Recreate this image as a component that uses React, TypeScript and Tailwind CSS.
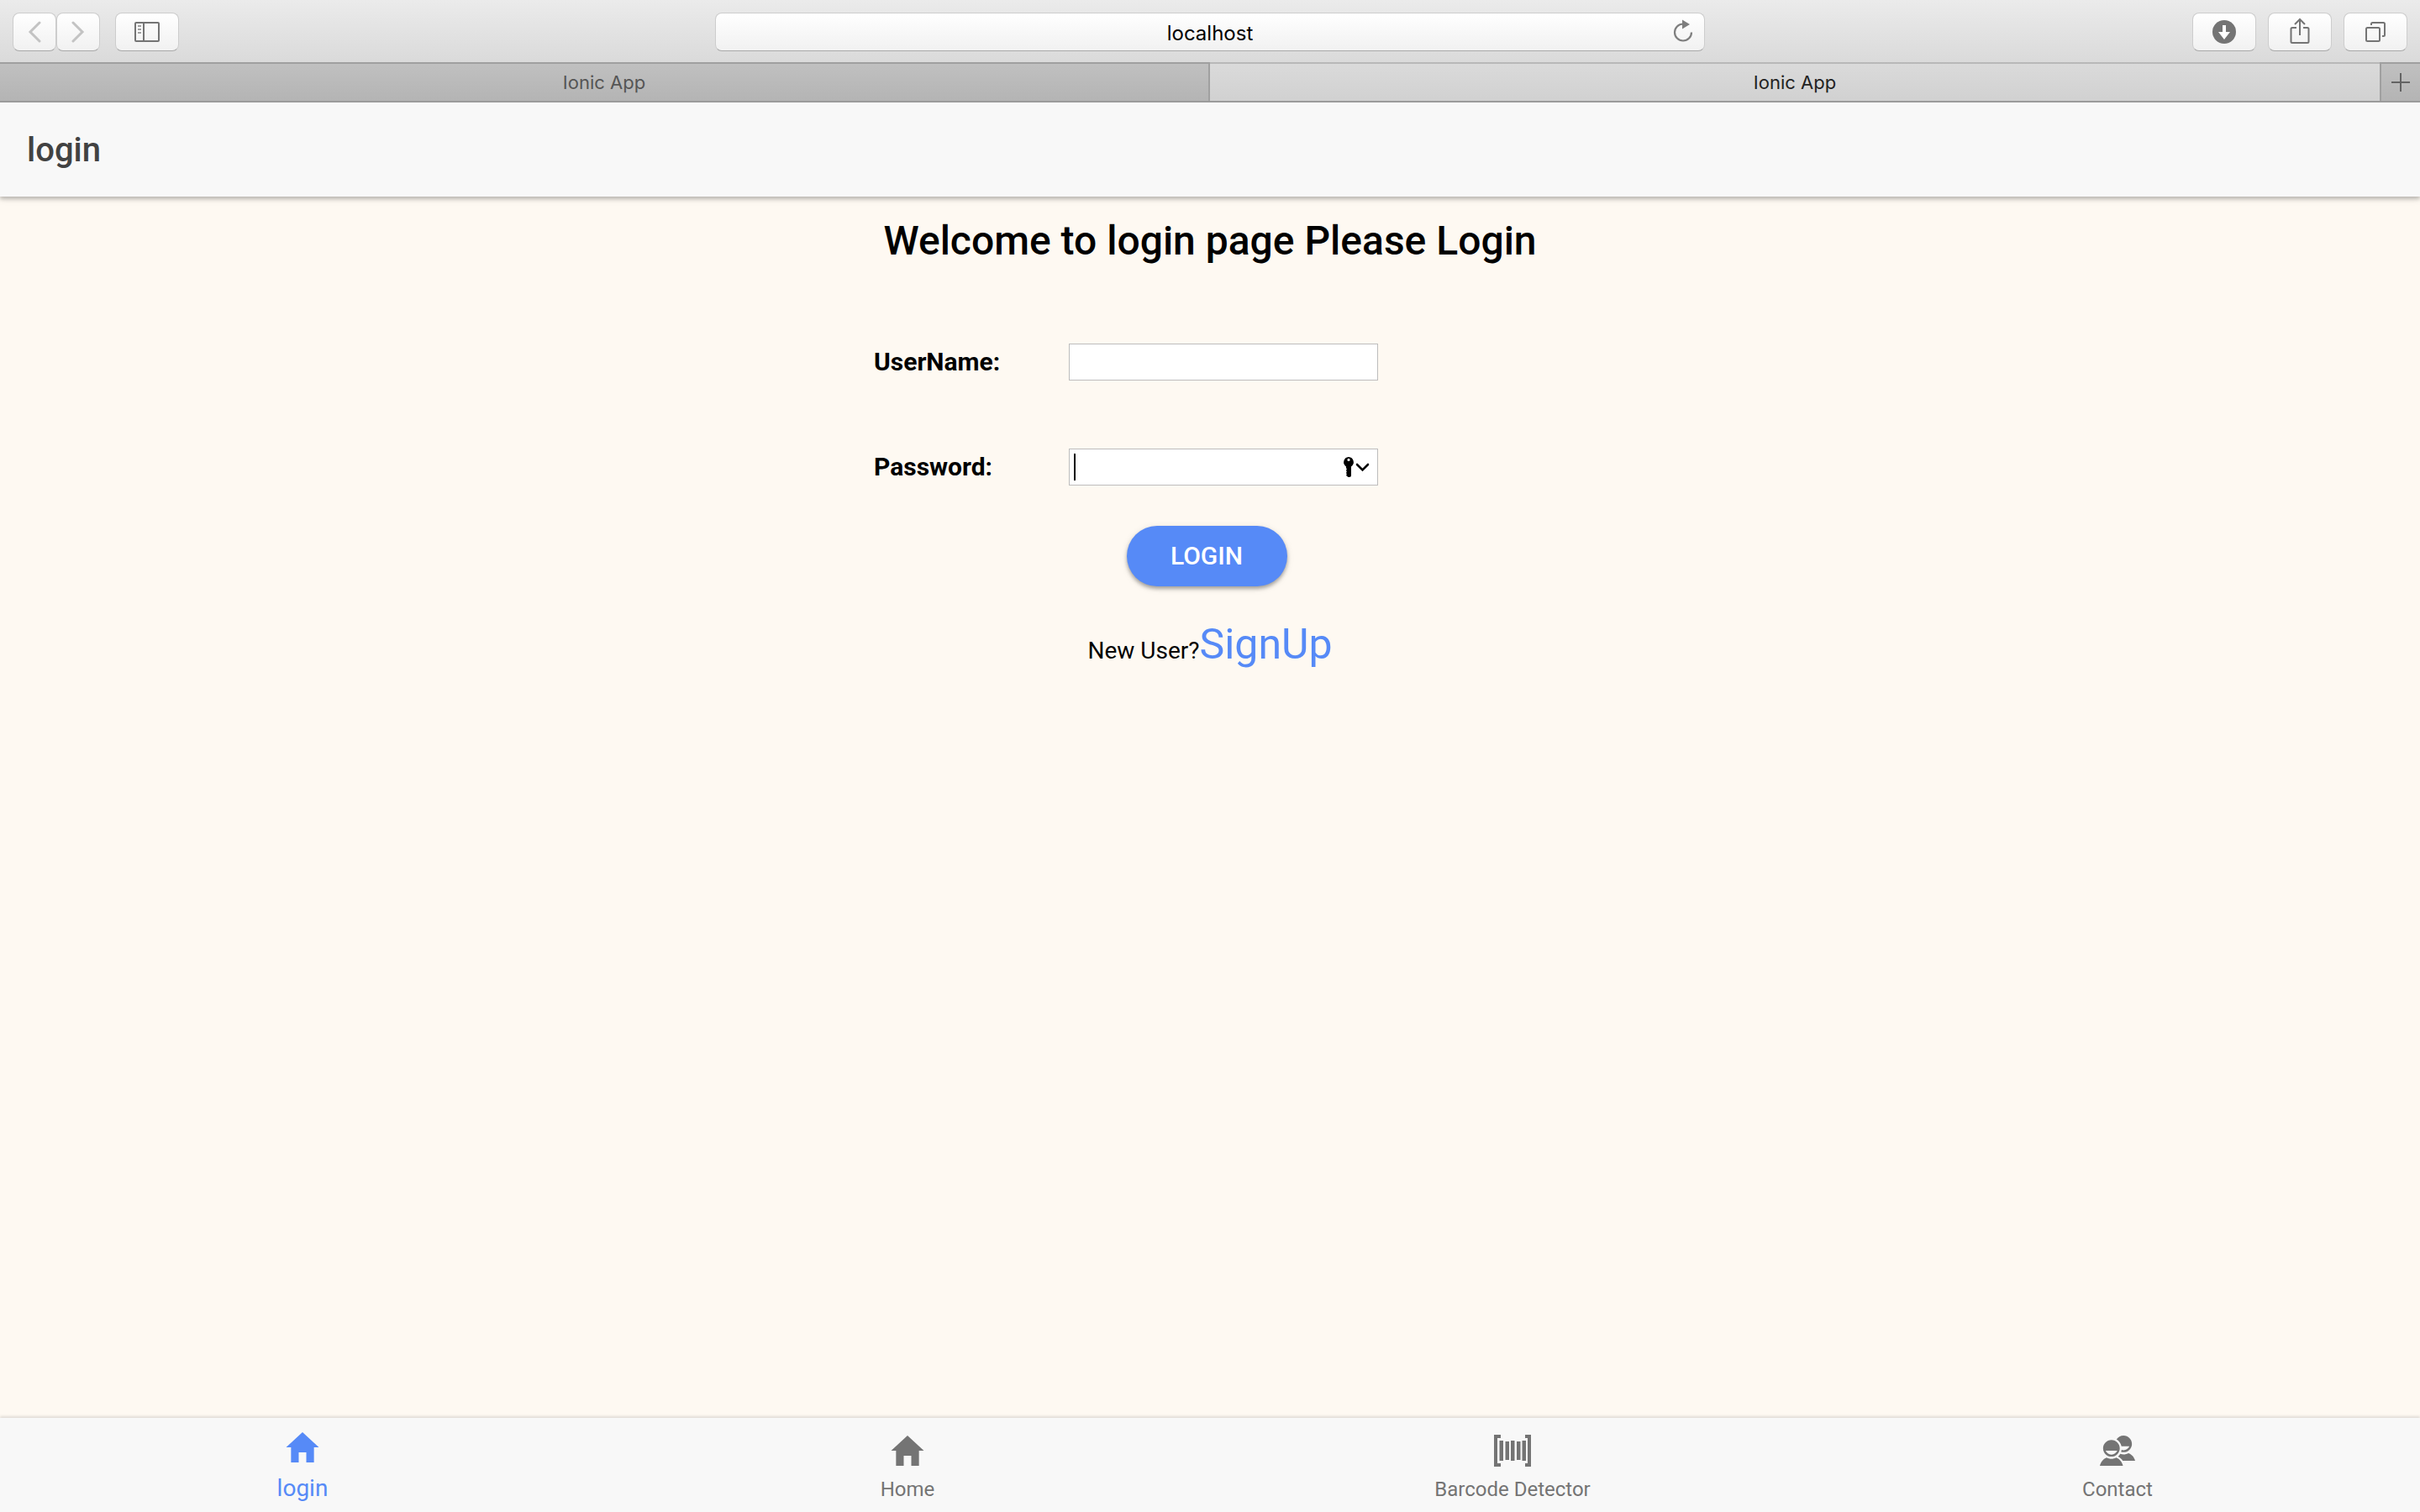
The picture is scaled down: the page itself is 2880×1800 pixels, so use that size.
import type { ReactNode } from "react";
import { IoMdHome, IoMdContacts } from "react-icons/io";

function ChromeButton({ label, wide, children }: { label: string; wide?: boolean; children: ReactNode }) {
  return (
    <button
      type="button"
      aria-label={label}
      className={
        "flex h-[46px] items-center justify-center rounded-[8px] border border-[#cdcdcd] border-b-[#a8a8a8] bg-linear-to-b from-white to-[#f1f1f1] " +
        (wide ? "w-[76px]" : "w-[52px]")
      }
    >
      {children}
    </button>
  );
}

function Toolbar() {
  return (
    <div className="grid h-[74px] grid-cols-[1fr_minmax(0,1178px)_1fr] items-center bg-linear-to-b from-[#ebebeb] to-[#dadada] px-[15px] pt-0.5">
      <div className="flex">
        <ChromeButton label="Back">
          <svg width="16" height="26" viewBox="0 0 16 26" fill="none" stroke="#c3c3c3" strokeWidth="3" strokeLinecap="round">
            <path d="M14 2 3 13l11 11" />
          </svg>
        </ChromeButton>
        <ChromeButton label="Forward">
          <svg width="16" height="26" viewBox="0 0 16 26" fill="none" stroke="#c3c3c3" strokeWidth="3" strokeLinecap="round">
            <path d="m2 2 11 11L2 24" />
          </svg>
        </ChromeButton>
        <div className="ml-[18px]">
          <ChromeButton label="Show sidebar" wide>
            <svg width="30" height="24" viewBox="0 0 30 24" fill="none" stroke="#747474" strokeWidth="2">
              <rect x="1" y="1" width="28" height="22" rx="1" />
              <path d="M11 1v22" />
              <path d="M4 5h4M4 9h4M4 13h4" stroke="#a0a0a0" />
            </svg>
          </ChromeButton>
        </div>
      </div>
      <div className="relative">
        <input
          aria-label="Address"
          defaultValue="localhost"
          className="block h-[46px] w-full rounded-[8px] border border-[#cdcdcd] border-b-[#a8a8a8] bg-linear-to-b from-white to-[#f1f1f1] pt-0.5 text-center font-[Inter,sans-serif] text-[24px] text-black outline-none"
        />
        <button type="button" aria-label="Reload" className="absolute top-2 right-3.5">
          <svg width="24" height="28" viewBox="0 0 24 28">
            <path d="M22 15.500A10 10 0 1 1 12 5.500" fill="none" stroke="#7e7e7e" strokeWidth="2.200" />
            <path d="M11 .5v11l9-5.500z" fill="#7e7e7e" />
          </svg>
        </button>
      </div>
      <div className="flex justify-end gap-3.5">
        <ChromeButton label="Downloads" wide>
          <svg width="28" height="28" viewBox="0 0 28 28">
            <circle cx="14" cy="14" r="14" fill="#747474" />
            <path d="M12 6h4v8h5l-7 9-7-9h5z" fill="#fff" />
          </svg>
        </ChromeButton>
        <ChromeButton label="Share" wide>
          <svg width="24" height="34" viewBox="0 0 24 34" fill="none" stroke="#747474" strokeWidth="2">
            <path d="M8 12H3a1.500 1.500 0 0 0-1.500 1.500v15A1.500 1.500 0 0 0 3 30h18a1.500 1.500 0 0 0 1.500-1.500v-15A1.500 1.500 0 0 0 21 12h-5M12 21V2M6 8l6-6 6 6" />
          </svg>
        </ChromeButton>
        <ChromeButton label="Show all tabs" wide>
          <svg width="24" height="24" viewBox="0 0 24 24" fill="none" stroke="#747474" strokeWidth="2">
            <rect x="1" y="7" width="16" height="16" rx="1.500" />
            <path d="M7 4V2.500A1.500 1.500 0 0 1 8.500 1h13A1.500 1.500 0 0 1 23 2.500v13a1.500 1.500 0 0 1-1.500 1.500H20" />
          </svg>
        </ChromeButton>
      </div>
    </div>
  );
}

function TabStrip() {
  return (
    <div className="relative z-10 flex h-12 border-b-2 border-[#9b9b9b] font-[Inter,sans-serif] text-[22px]">
      <button type="button" className="w-1/2 border-t-2 border-r-2 border-[#a0a0a0] bg-linear-to-b from-[#c0c0c0] to-[#b4b4b4] text-[#555]">
        Ionic App
      </button>
      <button type="button" className="flex-1 border-t-2 border-[#b8b8b8] bg-linear-to-b from-[#dadada] to-[#d1d1d1] text-[#222]">
        Ionic App
      </button>
      <button type="button" aria-label="New tab" className="flex w-12 items-center justify-center border-t-2 border-l-2 border-[#a0a0a0] bg-linear-to-b from-[#c0c0c0] to-[#b4b4b4]">
        <svg width="22" height="22" viewBox="0 0 22 22" stroke="#636363" strokeWidth="2">
          <path d="M11 0v22M0 11h22" />
        </svg>
      </button>
    </div>
  );
}

function KeyIcon() {
  return (
    <svg width="32" height="24" viewBox="0 0 32 24">
      <path
        fillRule="evenodd"
        d="M7 0a6.200 6.200 0 0 1 3 11.400V22a2 2 0 0 1-2 2H6.500L4 22l.8-1.500L4 19l.8-1.500L4 16l.8-1.500L4 13v-1.600A6.200 6.200 0 0 1 7 0zm0 1.800a1.600 1.600 0 1 0 0 3.200 1.600 1.600 0 0 0 0-3.200z"
      />
      <path d="m17 9 6.500 6.500L30 9" fill="none" stroke="#000" strokeWidth="2.600" strokeLinecap="round" />
    </svg>
  );
}

function LoginForm() {
  return (
    <form className="mx-auto mt-[88px] w-full max-w-[800px]" onSubmit={(e) => e.preventDefault()}>
      <div className="grid grid-cols-[232px_368px] items-center gap-y-[81px]">
        <label htmlFor="username" className="text-[30px] leading-11 font-bold">UserName:</label>
        <input id="username" type="text" className="h-11 w-full border border-[#bdbdbd] bg-white px-1.5 text-[28px] outline-none" />
        <label htmlFor="password" className="text-[30px] leading-11 font-bold">Password:</label>
        <div className="relative">
          <input id="password" type="password" className="block h-11 w-full border border-[#bdbdbd] bg-white px-1.5 text-[28px] outline-none" />
          <span className="absolute top-1.5 left-1.5 h-8 w-0.5 bg-black" />
          <button type="button" aria-label="Fill saved password" className="absolute top-2.5 right-2.5">
            <KeyIcon />
          </button>
        </div>
      </div>
      <div className="mt-12 flex justify-center pr-2">
        <button
          type="submit"
          className="h-[72px] w-[191px] rounded-full bg-[#568af7] pb-0.5 text-[30px] font-medium text-white shadow-[0_3px_4px_rgba(0,0,0,0.3),0_2px_10px_rgba(0,0,0,0.1)]"
        >
          LOGIN
        </button>
      </div>
      <p className="mt-9 text-center text-[28px] leading-[66px]">
        New User?<a href="#signup" className="text-[50px] text-[#568af7]">SignUp</a>
      </p>
    </form>
  );
}

function BarcodeIcon() {
  return (
    <svg width="48" height="48" viewBox="0 0 48 48" fill="#747474">
      <path d="M2 5h8v4H6v30h4v4H2zM46 5h-7v4h3v30h-3v4h7zM8.500 12h4.500v24H8.500zM15.500 13h4.500v22h-4.500zM22 12h4.500v24H22zM29 13h4.500v22H29zM35.500 12H40v24h-4.500z" />
    </svg>
  );
}

function NavTab({ href, label, active, children }: { href: string; label: string; active?: boolean; children: ReactNode }) {
  return (
    <a
      href={href}
      className={
        "flex flex-col items-center " + (active ? "pt-[11px] text-[28px] leading-[50px] text-[#568af7]" : "pt-[15px] text-[24px] leading-11 text-[#747474]")
      }
    >
      {children}
      <span>{label}</span>
    </a>
  );
}

export default function App() {
  return (
    <div className="flex min-h-screen flex-col bg-[#fef9f2] font-[Roboto,sans-serif] text-black">
      <Toolbar />
      <TabStrip />
      <header className="relative flex h-28 items-center bg-[#f8f8f8] px-8 pt-0.5 shadow-[0_3px_4px_rgba(0,0,0,0.18),0_3px_8px_rgba(0,0,0,0.12)]">
        <h1 className="text-[40px] font-medium text-[#424242]">login</h1>
      </header>
      <main className="flex-1 px-8 pt-[19px]">
        <h2 className="text-center text-[48px] leading-[68px] font-medium">Welcome to login page Please Login</h2>
        <LoginForm />
      </main>
      <nav className="grid h-28 grid-cols-4 bg-[#f8f8f8] shadow-[0_-2px_3px_rgba(0,0,0,0.12)]">
        <NavTab href="#login" label="login" active><IoMdHome size={48} /></NavTab>
        <NavTab href="#home" label="Home"><IoMdHome size={48} /></NavTab>
        <NavTab href="#barcode" label="Barcode Detector"><BarcodeIcon /></NavTab>
        <NavTab href="#contact" label="Contact"><IoMdContacts size={48} /></NavTab>
      </nav>
    </div>
  );
}
